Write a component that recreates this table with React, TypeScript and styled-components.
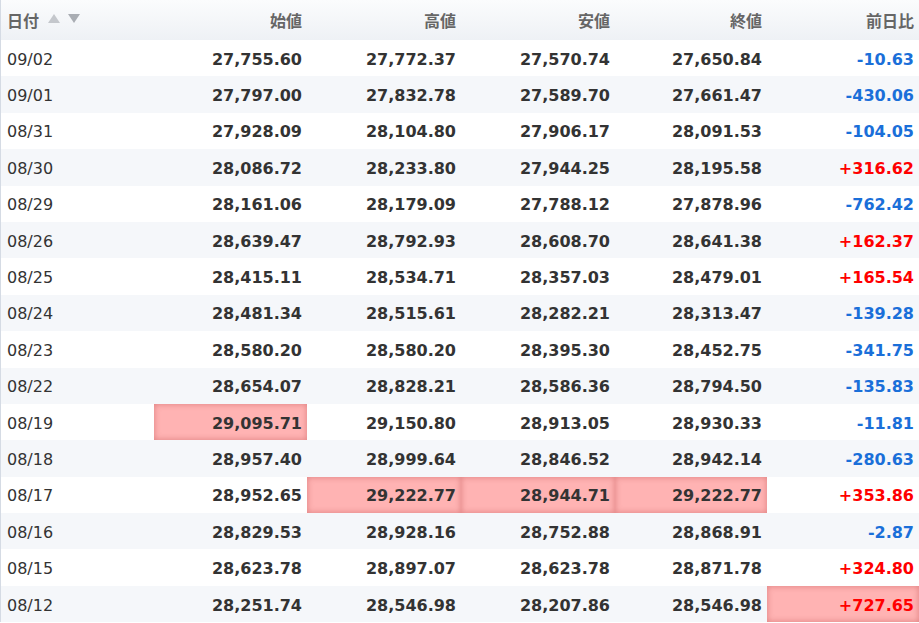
import React from "react";
import styled, { createGlobalStyle } from "styled-components";

const Global = createGlobalStyle`
  html, body { margin: 0; padding: 0; background: #fff; }
  body { font-family: "DejaVu Sans", "Noto Sans CJK JP", sans-serif; }
`;

type Row = { d: string; o: string; h: string; l: string; c: string; ch: string; hl?: string[] };

const rows: Row[] = [
  { d: "09/02", o: "27,755.60", h: "27,772.37", l: "27,570.74", c: "27,650.84", ch: "-10.63" },
  { d: "09/01", o: "27,797.00", h: "27,832.78", l: "27,589.70", c: "27,661.47", ch: "-430.06" },
  { d: "08/31", o: "27,928.09", h: "28,104.80", l: "27,906.17", c: "28,091.53", ch: "-104.05" },
  { d: "08/30", o: "28,086.72", h: "28,233.80", l: "27,944.25", c: "28,195.58", ch: "+316.62" },
  { d: "08/29", o: "28,161.06", h: "28,179.09", l: "27,788.12", c: "27,878.96", ch: "-762.42" },
  { d: "08/26", o: "28,639.47", h: "28,792.93", l: "28,608.70", c: "28,641.38", ch: "+162.37" },
  { d: "08/25", o: "28,415.11", h: "28,534.71", l: "28,357.03", c: "28,479.01", ch: "+165.54" },
  { d: "08/24", o: "28,481.34", h: "28,515.61", l: "28,282.21", c: "28,313.47", ch: "-139.28" },
  { d: "08/23", o: "28,580.20", h: "28,580.20", l: "28,395.30", c: "28,452.75", ch: "-341.75" },
  { d: "08/22", o: "28,654.07", h: "28,828.21", l: "28,586.36", c: "28,794.50", ch: "-135.83" },
  { d: "08/19", o: "29,095.71", h: "29,150.80", l: "28,913.05", c: "28,930.33", ch: "-11.81", hl: ["o"] },
  { d: "08/18", o: "28,957.40", h: "28,999.64", l: "28,846.52", c: "28,942.14", ch: "-280.63" },
  { d: "08/17", o: "28,952.65", h: "29,222.77", l: "28,944.71", c: "29,222.77", ch: "+353.86", hl: ["h", "l", "c"] },
  { d: "08/16", o: "28,829.53", h: "28,928.16", l: "28,752.88", c: "28,868.91", ch: "-2.87" },
  { d: "08/15", o: "28,623.78", h: "28,897.07", l: "28,623.78", c: "28,871.78", ch: "+324.80" },
  { d: "08/12", o: "28,251.74", h: "28,546.98", l: "28,207.86", c: "28,546.98", ch: "+727.65", hl: ["ch"] },
];

const Table = styled.div`
  width: 919px;
  border-left: 1px solid #d5dbe4;
  box-sizing: border-box;
`;

const Grid = styled.div`
  display: grid;
  grid-template-columns: 153px 153px 154px 154px 152px 152px;
`;

const Header = styled(Grid)`
  height: 40px;
  background: linear-gradient(#fbfcfd, #eef1f5);
  color: #666;
  font-weight: bold;
  font-size: 16px;
`;

const HeadCell = styled.div<{ $left?: boolean }>`
  display: flex;
  align-items: center;
  justify-content: ${(p) => (p.$left ? "flex-start" : "flex-end")};
  padding: 0 5px 0 6px;
  gap: 9px;
`;

const Arrows = styled.span`
  display: inline-flex;
  gap: 8px;
  margin-top: -3px;
`;

const Tri = styled.span<{ $down?: boolean; $c: string }>`
  width: 0;
  height: 0;
  border-left: 6.5px solid transparent;
  border-right: 6.5px solid transparent;
  ${(p) =>
    p.$down
      ? `border-top: 9px solid ${p.$c};`
      : `border-bottom: 9px solid ${p.$c};`}
`;

const BodyRow = styled(Grid)<{ $alt: boolean }>`
  height: 36.4px;
  background: ${(p) => (p.$alt ? "#f5f7fa" : "#fff")};
`;

const Cell = styled.div<{ $left?: boolean; $hl?: boolean; $color?: string }>`
  display: flex;
  align-items: center;
  justify-content: ${(p) => (p.$left ? "flex-start" : "flex-end")};
  padding: 2px 5px 0 6px;
  font-size: 16px;
  font-weight: ${(p) => (p.$left ? "normal" : "bold")};
  color: ${(p) => p.$color || "#333"};
  background: ${(p) => (p.$hl ? "#ffb3b3" : "transparent")};
  box-shadow: ${(p) => (p.$hl ? "inset 0 0 6px rgba(170, 50, 50, 0.4)" : "none")};
`;

export default function App() {
  return (
    <>
      <Global />
      <Table>
        <Header>
          <HeadCell $left>
            日付
            <Arrows>
              <Tri $c="#c4c7cc" />
              <Tri $down $c="#a9adb3" />
            </Arrows>
          </HeadCell>
          <HeadCell>始値</HeadCell>
          <HeadCell>高値</HeadCell>
          <HeadCell>安値</HeadCell>
          <HeadCell>終値</HeadCell>
          <HeadCell>前日比</HeadCell>
        </Header>
        {rows.map((r, i) => {
          const hl = r.hl || [];
          return (
            <BodyRow key={r.d} $alt={i % 2 === 1}>
              <Cell $left>{r.d}</Cell>
              <Cell $hl={hl.includes("o")}>{r.o}</Cell>
              <Cell $hl={hl.includes("h")}>{r.h}</Cell>
              <Cell $hl={hl.includes("l")}>{r.l}</Cell>
              <Cell $hl={hl.includes("c")}>{r.c}</Cell>
              <Cell $hl={hl.includes("ch")} $color={r.ch.startsWith("+") ? "#ff0000" : "#1a6fd9"}>
                {r.ch}
              </Cell>
            </BodyRow>
          );
        })}
      </Table>
    </>
  );
}
